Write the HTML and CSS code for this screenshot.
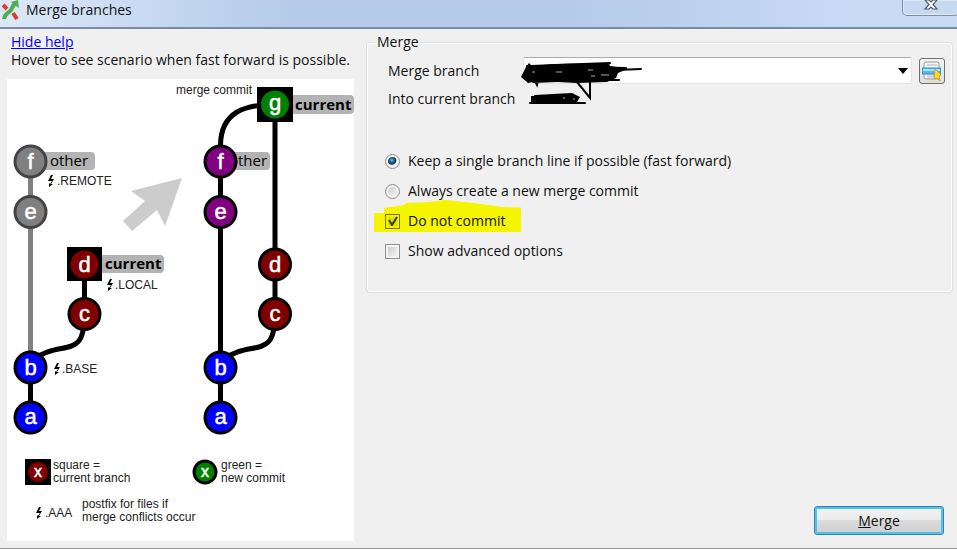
FILE: index.html
```html
<!DOCTYPE html>
<html lang="en">
<head>
    <meta charset="UTF-8">
    <meta name="viewport" content="width=device-width, initial-scale=1.0">
    <title>Merge branches</title>
    <link rel="stylesheet" href="styles.css">
</head>
<body>
    <header class="titlebar">
        <svg class="app-icon" width="18" height="20" viewBox="0 0 18 20">
            <path d="M1 5L5 9M11 13L15 19" fill="none" stroke="#dd3b2d" stroke-width="4"/>
            <path d="M2 19C3 13 7 13 9 10C11 6 11 5 14 3" fill="none" stroke="#4caf50" stroke-width="4"/>
            <path d="M9 2l7-2 1 8z" fill="#4caf50"/>
        </svg>
        <h1 class="title">Merge branches</h1>
        <button class="close" type="button" aria-label="Close">
            <svg width="16" height="12" viewBox="0 0 16 12">
                <path d="M2 0h4l2 2 2-2h4l-4 4.500 4 4.500h-4l-2-2-2 2h-4l4-4.500z" fill="#fff" stroke="#535a68" stroke-width="1.2"/>
            </svg>
        </button>
    </header>

    <main class="dialog">
        <section class="help">
            <a class="help-link" href="#">Hide help</a>
            <p class="help-text">Hover to see scenario when fast forward is possible.</p>

            <svg class="graph" width="347" height="462" viewBox="7 79 347 462">
                <defs>
                    <path id="bolt" d="M3 0L0 6L4 6L2 9L1 8L1 12L5 9L3 9L6 4L3 4L5 0Z"/>
                </defs>

                <path d="M123 221l22-20-14-10 51-13-17 48-8-16-25 21z" fill="#ccc"/>

                <!-- before the merge -->
                <rect class="tag" x="32" y="152" width="63" height="18" rx="4"/>
                <text class="tag-text" x="50" y="166">other</text>
                <path class="line remote" d="M30.500 161V368"/>
                <path class="line" d="M30.500 368V417M84.500 264V314C84.500 362 62 338 32 360"/>
                <circle class="node remote" cx="30.500" cy="161.500" r="15.500"/>
                <circle class="node remote" cx="30.500" cy="212" r="15.500"/>
                <rect class="tag" x="92" y="255" width="72" height="18" rx="4"/>
                <text class="tag-text bold" x="105" y="269">current</text>
                <rect x="67" y="247" width="35" height="34"/>
                <circle class="red" cx="84.500" cy="264.500" r="14"/>
                <circle class="node red" cx="84.500" cy="314" r="15.500"/>
                <circle class="node blue" cx="30.500" cy="367.500" r="15.500"/>
                <circle class="node blue" cx="30.500" cy="417.500" r="15.500"/>
                <text class="letter" x="30.500" y="169">f</text>
                <text class="letter" x="30.500" y="219">e</text>
                <text class="letter" x="84.500" y="272">d</text>
                <text class="letter" x="84.500" y="321">c</text>
                <text class="letter" x="30.500" y="375">b</text>
                <text class="letter" x="30.500" y="424">a</text>
                <use href="#bolt" x="48" y="175"/>
                <text class="postfix" x="57" y="185">.REMOTE</text>
                <use href="#bolt" x="107" y="279"/>
                <text class="postfix" x="115" y="289">.LOCAL</text>
                <use href="#bolt" x="54" y="363"/>
                <text class="postfix" x="62" y="373">.BASE</text>

                <!-- after the merge -->
                <text class="note" x="176" y="94">merge commit</text>
                <rect class="tag" x="222" y="152" width="48" height="18" rx="4"/>
                <text class="tag-text" x="229" y="166">other</text>
                <rect class="tag" x="282" y="95" width="72" height="19" rx="4"/>
                <text class="tag-text bold" x="295" y="110">current</text>
                <path class="line" d="M275 104V314C275 362 252 338 222 360M275 104C244 105 221 112 220.500 145V417"/>
                <rect x="257" y="87" width="36" height="35"/>
                <circle class="green" cx="275" cy="104.500" r="14"/>
                <circle class="node purple" cx="220.500" cy="161.500" r="15.500"/>
                <circle class="node purple" cx="220.500" cy="212" r="15.500"/>
                <circle class="node red" cx="275" cy="264.500" r="15.500"/>
                <circle class="node red" cx="275" cy="314" r="15.500"/>
                <circle class="node blue" cx="220.500" cy="367.500" r="15.500"/>
                <circle class="node blue" cx="220.500" cy="417.500" r="15.500"/>
                <text class="letter" x="275" y="110">g</text>
                <text class="letter" x="220.500" y="169">f</text>
                <text class="letter" x="220.500" y="219">e</text>
                <text class="letter" x="275" y="272">d</text>
                <text class="letter" x="275" y="321">c</text>
                <text class="letter" x="220.500" y="375">b</text>
                <text class="letter" x="220.500" y="424">a</text>

                <!-- legend -->
                <rect x="25" y="459" width="26" height="26"/>
                <circle class="red" cx="38" cy="472" r="10"/>
                <text class="letter small" x="38" y="477">x</text>
                <text class="note" x="53" y="469">square =</text>
                <text class="note" x="53" y="482">current branch</text>
                <circle class="node green" cx="205" cy="472" r="11"/>
                <text class="letter small" x="205" y="477">x</text>
                <text class="note" x="221" y="469">green =</text>
                <text class="note" x="221" y="482">new commit</text>
                <use href="#bolt" x="36" y="507"/>
                <text class="postfix" x="45" y="517">.AAA</text>
                <text class="note" x="82" y="508">postfix for files if</text>
                <text class="note" x="82" y="521">merge conflicts occur</text>
            </svg>
        </section>

        <form class="merge-form">
            <fieldset class="merge-box">
                <legend>Merge</legend>

                <div class="row">
                    <label class="row-label" for="branch">Merge branch</label>
                    <div class="branch-field">
                        <select class="branch" id="branch"><option></option></select>
                        <svg class="arrow" width="10" height="6" viewBox="0 0 10 6"><path d="M0 0h10L5 6z"/></svg>
                        <svg class="scribble" width="124" height="50" viewBox="520 60 124 50">
                            <path d="M525 67l3-4 3 3 22-2 55-1 1 3 14 2 1 2-7 3-2 5-9 4-30 1-40-2-9 2-7-6z"/>
                            <path d="M523 76l12-2M526 66l10 19 1-4M530 66l79-3M560 67l65 1M590 71l50-2M529 80l89 0M532 82l50-2M576 82l13 16V77" class="pen"/>
                            <path d="M530 96l33-1 8-2 8 4-3 5-46 1z"/>
                            <path d="M529 103h55M534 96l37-2" class="pen"/>
                            <path d="M531 72h3M555 72h6M587 70h5M600 75h8M590 76h4M572 99h2M562 98h2" class="speck"/>
                        </svg>
                    </div>
                    <button class="pick" type="button" aria-label="Choose branch">
                        <svg width="20" height="20" viewBox="0 0 20 20">
                            <rect x="2" y="1" width="15" height="17" rx="2" fill="#f5f5f5" stroke="#999"/>
                            <path d="M5 4h10M5 14h9M5 16h9" stroke="#b5b5b5"/>
                            <rect x="0.500" y="7" width="18" height="6" fill="#55b9ee" stroke="#2e93d1"/>
                            <path d="M1 9h17" stroke="#a7e2ff" stroke-width="2"/>
                            <path d="M13 8l6 6-2 1 1 5-3-3-3 1z" fill="#ffdc32" stroke="#d39c13"/>
                        </svg>
                    </button>
                </div>
                <div class="row into">
                    <span class="row-label">Into current branch</span>
                </div>

                <div class="options">
                    <label class="option"><input class="radio" type="radio" name="mode" checked>Keep a single branch line if possible (fast forward)</label>
                    <label class="option"><input class="radio" type="radio" name="mode">Always create a new merge commit</label>
                    <label class="option marked">
                        <svg class="marker" width="147" height="33" viewBox="0 0 147 33"><path d="M0 13h10V8l20-3 2-2 22-1 17-2 28 3 29 4 39 1v24H0z"/></svg>
                        <input class="check" type="checkbox" checked>
                        <svg class="tick" width="10" height="10" viewBox="0 0 10 10"><path d="M1 4l3 5 5-8"/></svg>
                        <span>Do not commit</span>
                    </label>
                    <label class="option"><input class="check" type="checkbox">Show advanced options</label>
                </div>
            </fieldset>

            <button class="merge-button" type="button"><u>M</u>erge</button>
        </form>
    </main>
</body>
</html>
```

FILE: styles.css
```css
* {
    box-sizing: border-box;
}

body {
    margin: 0;
    min-height: 100vh;
    display: flex;
    flex-direction: column;
    background-color: #f0f0f0;
    border-bottom: 1px solid #999;
    color: #111;
    font-family: "Open Sans", "Noto Sans", sans-serif;
    font-size: 14px;
    line-height: 18px;
}

.titlebar {
    display: flex;
    align-items: flex-start;
    height: 29px;
    padding-left: 2px;
    background: linear-gradient(90deg, #dde8f7 0, #cbdcf3 120px, #b4cae8 300px, #b5cbe9 60%, #c9daf5 90%);
    border-bottom: 2px solid #7b8ba0;
    overflow: hidden;
}

.app-icon {
    flex: none;
}

.title {
    flex: 1;
    margin: 0 0 0 6px;
    font-size: 14px;
    font-weight: normal;
    line-height: 20px;
}

.close {
    display: flex;
    justify-content: center;
    width: 57px;
    height: 16px;
    margin-right: -2px;
    padding: 0;
    background-color: #c7d8f1;
    border: 1px solid #7d8da6;
    border-top: 0;
    border-radius: 0 0 5px 5px;
    box-shadow: inset 0 0 0 1px #dfe9f8;
}

.dialog {
    flex: 1;
    display: flex;
    gap: 12px;
    padding: 4px 4px 7px 7px;
}

.help {
    flex: none;
}

.help-link {
    margin-left: 4px;
    color: #00f;
}

.help-text {
    margin: 0 0 10px 4px;
}

.graph {
    display: block;
    background-color: #fff;
    font-family: "Liberation Sans", Arial, sans-serif;
}

.tag {
    fill: #b3b3b3;
}

.tag-text {
    font-family: "Open Sans", "Noto Sans", sans-serif;
    font-size: 15px;
}

.bold {
    font-weight: bold;
}

.line {
    fill: none;
    stroke: #000;
    stroke-width: 5;
}

.line.remote {
    stroke: #808080;
}

.node {
    stroke: #000;
    stroke-width: 3;
}

.node.remote {
    fill: #808080;
    stroke: #444;
}

.red {
    fill: #800000;
}

.blue {
    fill: #00f;
}

.green {
    fill: #008000;
}

.purple {
    fill: #800080;
}

.letter {
    fill: #fff;
    stroke: #fff;
    stroke-width: 0.5px;
    font-size: 22px;
    text-anchor: middle;
}

.letter.small {
    font-size: 16px;
}

.postfix, .note {
    fill: #222;
    font-size: 12px;
}

.merge-form {
    flex: 1;
    display: flex;
    flex-direction: column;
    justify-content: space-between;
}

.merge-box {
    min-width: 0;
    height: 260px;
    margin: 0;
    padding: 6px 7px 0 21px;
    border: 1px solid #d5dfe5;
    border-radius: 4px;
    box-shadow: inset 0 0 0 1px #fff;
}

.merge-box legend {
    margin-left: -13px;
    padding: 0 2px;
}

.row {
    display: flex;
    align-items: center;
}

.row-label {
    flex: none;
    width: 135px;
}

.branch-field {
    flex: 1;
    position: relative;
    height: 27px;
}

.branch {
    display: block;
    width: 100%;
    height: 27px;
    appearance: none;
    background-color: #fff;
    border: 1px solid #e2e3ea;
    border-top-color: #abadb3;
    border-radius: 2px;
}

.arrow {
    position: absolute;
    top: 11px;
    right: 4px;
    pointer-events: none;
}

.scribble {
    position: absolute;
    top: 3px;
    left: -2px;
    pointer-events: none;
}

.pen {
    fill: none;
    stroke: #000;
    stroke-width: 2;
    stroke-linecap: round;
}

.speck {
    stroke: #aaa;
    stroke-width: 1;
}

.pick {
    display: flex;
    align-items: center;
    justify-content: center;
    width: 26px;
    height: 26px;
    margin-left: 7px;
    padding: 0;
    background: linear-gradient(#f4f4f4, #ddd);
    border: 1px solid #707070;
    border-radius: 3px;
}

.into {
    margin-top: 6px;
}

.options {
    display: flex;
    flex-direction: column;
    align-items: flex-start;
    gap: 12px;
    margin-top: 44px;
    margin-left: -3px;
}

.option {
    display: flex;
    align-items: center;
    gap: 8px;
}

.radio, .check {
    flex: none;
    appearance: none;
    width: 15px;
    height: 15px;
    margin: 0;
    border: 1px solid #8e8f8f;
    background: linear-gradient(135deg, #c8c8c8, #f8f8f8);
    box-shadow: inset 0 0 0 2px #f4f4f4;
}

.radio {
    border-radius: 50%;
}

.radio:checked {
    background: radial-gradient(circle at 45% 40%, #7fd0f5 0, #1d6a9c 2px, #12304f 4px, #e5e5e5 5px);
}

.marked {
    position: relative;
}

.marker {
    position: absolute;
    top: -12px;
    left: -11px;
    fill: #f5f500;
}

.marked .check, .marked span {
    position: relative;
}

.marked .check {
    background: #e0e000;
    border-color: #777700;
    box-shadow: inset 0 0 0 2px #f0f000;
}

.tick {
    position: absolute;
    top: 4px;
    left: 3px;
    fill: none;
    stroke: #333b00;
    stroke-width: 2;
}

.merge-button {
    align-self: flex-end;
    width: 130px;
    height: 29px;
    margin: 0 9px 6px 0;
    padding: 0;
    background: linear-gradient(#f2f2f2 0, #ebebeb 50%, #dadada 50%, #cfcfcf 100%);
    border: 1px solid #3c7fb1;
    border-radius: 3px;
    box-shadow: inset 0 0 0 2px #48c5ee;
    color: #111;
    font: inherit;
}
```
